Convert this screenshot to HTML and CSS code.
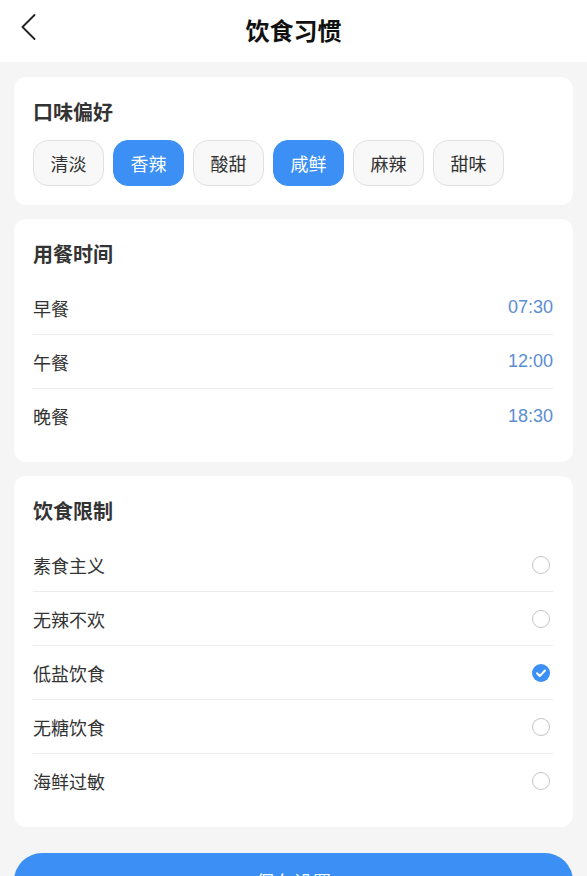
FILE: index.html
```html
<!DOCTYPE html>
<html lang="zh-CN">
<head>
<meta charset="utf-8">
<title>饮食习惯</title>
<link rel="stylesheet" href="styles.css">
</head>
<body>
<header class="topbar">
  <button class="back" aria-label="返回">
    <svg width="16" height="26" viewBox="0 0 16 26"><path d="M13.5 1 L1.5 13 L13.5 25" fill="none" stroke="#222" stroke-width="1.8" stroke-linecap="round" stroke-linejoin="round"/></svg>
  </button>
  <h1 class="title">饮食习惯</h1>
</header>
<main class="content">
  <section class="card">
    <h2 class="card-title">口味偏好</h2>
    <div class="chips">
      <span class="chip">清淡</span>
      <span class="chip active">香辣</span>
      <span class="chip">酸甜</span>
      <span class="chip active">咸鲜</span>
      <span class="chip">麻辣</span>
      <span class="chip">甜味</span>
    </div>
  </section>
  <section class="card">
    <h2 class="card-title">用餐时间</h2>
    <ul class="rows">
      <li class="row"><span>早餐</span><span class="time">07:30</span></li>
      <li class="row"><span>午餐</span><span class="time">12:00</span></li>
      <li class="row"><span>晚餐</span><span class="time">18:30</span></li>
    </ul>
  </section>
  <section class="card">
    <h2 class="card-title">饮食限制</h2>
    <ul class="rows">
      <li class="row"><span>素食主义</span><span class="radio"></span></li>
      <li class="row"><span>无辣不欢</span><span class="radio"></span></li>
      <li class="row"><span>低盐饮食</span><span class="radio checked"><svg width="18" height="18" viewBox="0 0 18 18"><path d="M5 9.3 L7.8 12 L13 6.5" fill="none" stroke="#fff" stroke-width="2" stroke-linecap="round" stroke-linejoin="round"/></svg></span></li>
      <li class="row"><span>无糖饮食</span><span class="radio"></span></li>
      <li class="row"><span>海鲜过敏</span><span class="radio"></span></li>
    </ul>
  </section>
  <button class="save">保存设置</button>
</main>
</body>
</html>
```
FILE: styles.css
```css
* { box-sizing: border-box; }
html, body {
  margin: 0;
  padding: 0;
  background: #f5f5f5;
  font-family: "Liberation Sans", "Noto Sans CJK SC", sans-serif;
  color: #333;
}
.topbar {
  height: 62px;
  background: #fff;
  display: flex;
  align-items: center;
  justify-content: center;
  position: relative;
  padding-bottom: 2px;
}
.back {
  position: absolute;
  left: 21px;
  top: 14px;
  border: 0;
  background: none;
  padding: 0;
  width: 16px;
  height: 26px;
  display: flex;
}
.title {
  margin: 0;
  font-size: 24px;
  font-weight: 700;
  color: #111;
  line-height: 30px;
  font-family: "Noto Sans CJK SC", sans-serif;
}
.content {
  padding: 15px 14px 0;
  display: flex;
  flex-direction: column;
  gap: 14px;
}
.card {
  background: #fff;
  border-radius: 12px;
  padding: 22px 20px 19px 19px;
}
.card-title {
  margin: 0 0 14px;
  font-size: 20px;
  font-weight: 700;
  line-height: 26px;
  color: #333;
  font-family: "Noto Sans CJK SC", sans-serif;
}
.chips {
  display: flex;
  gap: 9px;
  padding-top: 1px;
}
.chip {
  width: 71px;
  height: 46px;
  border: 1px solid #e0e0e0;
  background: #f8f8f8;
  border-radius: 15px;
  display: flex;
  align-items: center;
  justify-content: center;
  font-size: 18px;
  color: #333;
  font-family: "Noto Sans CJK SC", sans-serif;
}
.chip.active {
  background: #3b8ff5;
  border-color: #3b8ff5;
  color: #fff;
}
.rows {
  list-style: none;
  margin: 0;
  padding: 0;
}
.row {
  height: 54px;
  display: flex;
  align-items: center;
  justify-content: space-between;
  border-bottom: 1px solid #ececec;
  font-size: 18px;
  color: #333;
  font-family: "Noto Sans CJK SC", sans-serif;
}
.row:last-child { border-bottom: 0; }
.time {
  font-family: "Liberation Sans", sans-serif;
  color: #5b8dd3;
  font-size: 18px;
}
.radio {
  width: 18px;
  height: 18px;
  border-radius: 50%;
  border: 1.5px solid #c4c4c4;
  margin-right: 3px;
  display: flex;
}
.radio.checked {
  border: 0;
  background: #3b8ff5;
}
.save {
  margin-top: 12px;
  height: 56px;
  border: 0;
  border-radius: 28px;
  background: #3b8ff5;
  color: #fff;
  font-size: 19px;
  font-family: "Noto Sans CJK SC", sans-serif;
  width: 100%;
}
```
